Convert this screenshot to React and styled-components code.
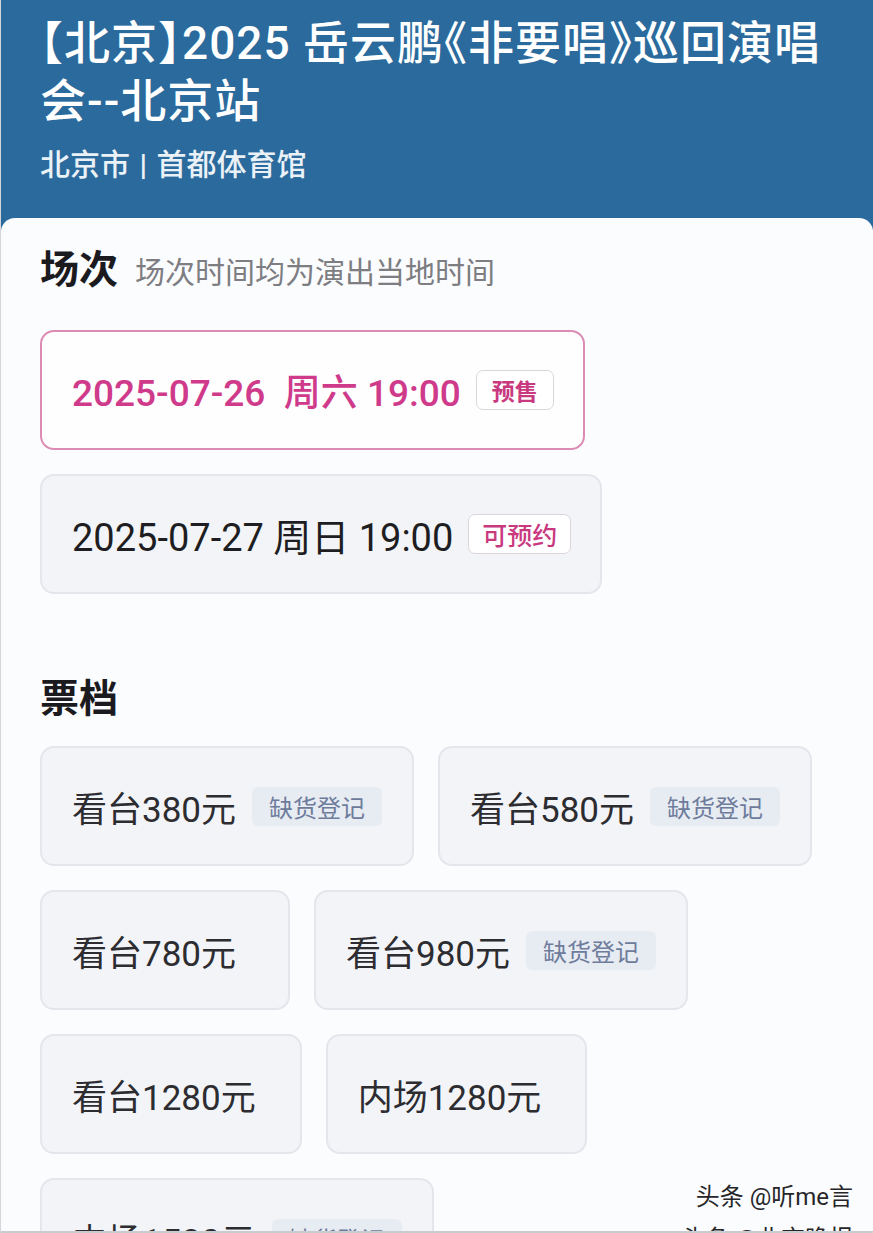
import styled, { createGlobalStyle } from "styled-components";

const GlobalStyle = createGlobalStyle`
  html, body {
    margin: 0;
    padding: 0;
    height: 1233px;
    overflow: hidden;
    background: #fafbfd;
  }
  body {
    font-family: Roboto, "Noto Sans CJK SC", "Noto Sans", sans-serif;
    color: #1f1f24;
  }
`;

// Page
const Page = styled.div`
  position: relative;
  height: 1233px;
  overflow: hidden;
  background: #fafbfd;
  border-left: 1px solid #d4d6da;
  box-sizing: border-box;
`;

// Header
const Header = styled.header`
  background: #2a6a9c;
  padding: 14px 30px 46px 39px;
  color: #fff;
`;

const Title = styled.h1`
  margin: 0;
  font-size: 46px;
  font-weight: 500;
  line-height: 58px;
  letter-spacing: 1px;
  max-width: 800px;
  font-feature-settings: "halt";
`;

const Venue = styled.div`
  margin-top: 16px;
  font-size: 30px;
  font-weight: 500;
  line-height: 38px;
  color: #eaf1f7;
  word-spacing: 2px;
`;

const Divider = styled.span`
  font-weight: 700;
`;

// Main panel
const Panel = styled.main`
  margin-top: -12px;
  border-radius: 14px 14px 0 0;
  background: #fbfcfe;
  padding: 30px 39px 0 39px;
`;

const SectionHead = styled.div`
  display: flex;
  align-items: baseline;
  gap: 17px;
  margin-top: ${p => p.$top || 0}px;
  margin-bottom: ${p => p.$bottom || 0}px;
`;

const SectionTitle = styled.h2`
  margin: 0;
  font-size: 39px;
  font-weight: 700;
  line-height: 42px;
  color: #1b1b1f;
`;

const SectionNote = styled.span`
  font-size: 30px;
  color: #7d7d82;
`;

// Sessions
const SessionList = styled.div`
  display: flex;
  flex-direction: column;
  align-items: flex-start;
  gap: 24px;
`;

const SessionCard = styled.div`
  display: inline-flex;
  align-items: center;
  gap: 15px;
  height: 120px;
  box-sizing: border-box;
  padding: 0 29px 0 30px;
  border-radius: 14px;
  border: 2px solid ${p => (p.$active ? "#dc8cb4" : "#e3e6eb")};
  background: ${p => (p.$active ? "#fefeff" : "#f2f4f7")};
`;

const SessionText = styled.span`
  font-size: ${p => (p.$active ? 37 : 38)}px;
  font-weight: ${p => (p.$active ? 500 : 400)};
  color: ${p => (p.$active ? "#cf3a8a" : "#1e1e22")};
  white-space: pre;
`;

const StatusBadge = styled.span`
  display: inline-flex;
  align-items: center;
  justify-content: center;
  height: 40px;
  padding: 0 ${p => (p.$wide ? 13 : 15)}px;
  box-sizing: border-box;
  border: 1.5px solid #dcd6da;
  border-radius: 7px;
  background: #fff;
  font-size: ${p => (p.$wide ? 25 : 23)}px;
  font-weight: ${p => (p.$wide ? 500 : 700)};
  color: #c9397f;
`;

// Tickets
const TicketGrid = styled.div`
  display: flex;
  flex-wrap: wrap;
  gap: 24px;
`;

const TicketCard = styled.div`
  display: inline-flex;
  align-items: center;
  gap: 16px;
  min-width: 250px;
  height: 120px;
  box-sizing: border-box;
  padding: 0 ${p => (p.$badge ? 30 : 44)}px 0 30px;
  border-radius: 14px;
  border: 2px solid #e3e6eb;
  background: #f2f4f7;
`;

const TicketName = styled.span`
  font-size: 35px;
  font-weight: 400;
  color: #2c2c31;
`;

const SoldOutBadge = styled.span`
  display: inline-flex;
  align-items: center;
  height: 39px;
  padding: 0 17px;
  border-radius: 6px;
  background: #e7ebf2;
  font-size: 24px;
  color: #6e7c9c;
`;

// Watermark
const Watermark = styled.div`
  position: absolute;
  right: 20px;
  top: 1176px;
  text-align: right;
  font-size: 24px;
  line-height: 42px;
  color: #26262a;
  text-shadow: 0 0 2px #fff, 0 0 2px #fff;
`;

const BottomEdge = styled.div`
  position: absolute;
  left: 0;
  right: 0;
  bottom: 0;
  height: 2px;
  background: #c9cbd0;
`;

const sessions = [
  { text: "2025-07-26  周六 19:00", status: "预售", active: true },
  { text: "2025-07-27 周日 19:00", status: "可预约", active: false },
];

const tickets = [
  { name: "看台380元", soldOut: true },
  { name: "看台580元", soldOut: true },
  { name: "看台780元", soldOut: false },
  { name: "看台980元", soldOut: true },
  { name: "看台1280元", soldOut: false },
  { name: "内场1280元", soldOut: false },
  { name: "内场1580元", soldOut: true },
];

export default function App() {
  return (
    <>
      <GlobalStyle />
      <Page>
        <Header>
          <Title>【北京】2025 岳云鹏《非要唱》巡回演唱会--北京站</Title>
          <Venue>北京市 <Divider>|</Divider> 首都体育馆</Venue>
        </Header>

        <Panel>
          <SectionHead $bottom={38}>
            <SectionTitle>场次</SectionTitle>
            <SectionNote>场次时间均为演出当地时间</SectionNote>
          </SectionHead>

          <SessionList>
            {sessions.map(s => (
              <SessionCard key={s.text} $active={s.active}>
                <SessionText $active={s.active}>{s.text}</SessionText>
                <StatusBadge $wide={!s.active}>{s.status}</StatusBadge>
              </SessionCard>
            ))}
          </SessionList>

          <SectionHead $top={84} $bottom={26}>
            <SectionTitle>票档</SectionTitle>
          </SectionHead>

          <TicketGrid>
            {tickets.map(t => (
              <TicketCard key={t.name} $badge={t.soldOut}>
                <TicketName>{t.name}</TicketName>
                {t.soldOut && <SoldOutBadge>缺货登记</SoldOutBadge>}
              </TicketCard>
            ))}
          </TicketGrid>
        </Panel>

        <Watermark>
          <div>头条 @听me言</div>
          <div>头条 @北京晚报</div>
        </Watermark>
        <BottomEdge />
      </Page>
    </>
  );
}
